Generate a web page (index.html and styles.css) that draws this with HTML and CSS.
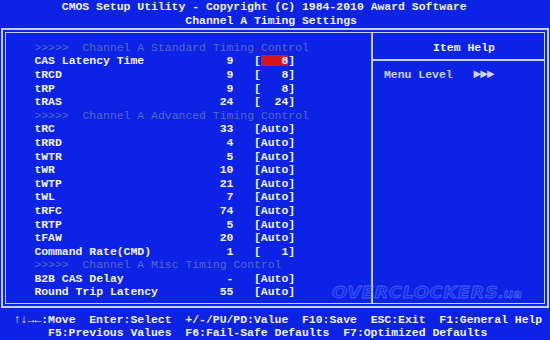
FILE: index.html
```html
<!DOCTYPE html>
<html lang="en">
<head>
  <meta charset="UTF-8" />
  <title>CMOS Setup Utility — Channel A Timing Settings</title>
  <link rel="stylesheet" href="styles.css">
</head>
<body>

<div class="screen">
  <header class="title">
    <div class="line t1">CMOS Setup Utility - Copyright (C) 1984-2010 Award Software</div>
    <div class="line t2">Channel A Timing Settings</div>
  </header>

  <main class="frame">
    <div class="frame-inner">
      <section class="items">
        <div class="row group">&gt;&gt;&gt;&gt;&gt;  Channel A Standard Timing Control</div>
        <div class="row"><span class="label">CAS Latency Time</span><span class="value">9</span><span class="setting">[<span class="sel">   8</span>]</span></div>
        <div class="row"><span class="label">tRCD</span><span class="value">9</span><span class="setting">[   8]</span></div>
        <div class="row"><span class="label">tRP</span><span class="value">9</span><span class="setting">[   8]</span></div>
        <div class="row"><span class="label">tRAS</span><span class="value">24</span><span class="setting">[  24]</span></div>
        <div class="row group">&gt;&gt;&gt;&gt;&gt;  Channel A Advanced Timing Control</div>
        <div class="row"><span class="label">tRC</span><span class="value">33</span><span class="setting">[Auto]</span></div>
        <div class="row"><span class="label">tRRD</span><span class="value">4</span><span class="setting">[Auto]</span></div>
        <div class="row"><span class="label">tWTR</span><span class="value">5</span><span class="setting">[Auto]</span></div>
        <div class="row"><span class="label">tWR</span><span class="value">10</span><span class="setting">[Auto]</span></div>
        <div class="row"><span class="label">tWTP</span><span class="value">21</span><span class="setting">[Auto]</span></div>
        <div class="row"><span class="label">tWL</span><span class="value">7</span><span class="setting">[Auto]</span></div>
        <div class="row"><span class="label">tRFC</span><span class="value">74</span><span class="setting">[Auto]</span></div>
        <div class="row"><span class="label">tRTP</span><span class="value">5</span><span class="setting">[Auto]</span></div>
        <div class="row"><span class="label">tFAW</span><span class="value">20</span><span class="setting">[Auto]</span></div>
        <div class="row"><span class="label">Command Rate(CMD)</span><span class="value">1</span><span class="setting">[   1]</span></div>
        <div class="row group">&gt;&gt;&gt;&gt;&gt;  Channel A Misc Timing Control</div>
        <div class="row"><span class="label">B2B CAS Delay</span><span class="value">-</span><span class="setting">[Auto]</span></div>
        <div class="row"><span class="label">Round Trip Latency</span><span class="value">55</span><span class="setting">[Auto]</span></div>
      </section>

      <aside class="help">
        <div class="help-title">Item Help</div>
        <div class="help-line">Menu Level   <span class="arrows">►►►</span></div>
      </aside>
    </div>
  </main>

  <footer class="keys">
    <div class="line k1">↑↓→←:Move  Enter:Select  +/-/PU/PD:Value  F10:Save  ESC:Exit  F1:General Help</div>
    <div class="line k2">F5:Previous Values  F6:Fail-Safe Defaults  F7:Optimized Defaults</div>
  </footer>

  <div class="watermark">OVERCLOCKERS<span class="tld">.ua</span></div>
</div>

</body>
</html>
```

FILE: styles.css
```css
* { box-sizing: border-box; }
html, body {
  margin: 0;
  height: 100%;
}
body {
  background: #0c22e4;
  color: #f2f4ff;
  font-family: 'Liberation Mono', 'DejaVu Sans Mono', monospace;
  font-size: 11.458px;
  font-weight: bold;
  line-height: 13.6px;
  overflow: hidden;
}

.screen {
  position: relative;
  width: 550px;
  height: 340px;
}

.line { white-space: pre; height: 13.6px; }

/* top title */
.title .t1 { padding-left: 9ch; }
.title .t2 { padding-left: 27ch; }

/* double line frame */
.frame {
  margin: 0.8px 1px 0 1px;
  border: 2px solid #c4d0ff;
  padding: 2px;
}
.frame-inner {
  display: flex;
  border: 1px solid #c4d0ff;
}

.items {
  flex: 0 0 365px;
  padding: 7.8px 0 3.8px 28.4px;
}
.row {
  display: grid;
  grid-template-columns: 25ch 4ch 3ch 6ch;
  height: 13.6px;
  white-space: pre;
}
.row .value { text-align: right; }
.row .setting { grid-column: 4; }
.row.group {
  display: block;
  color: #5468c6;
  font-weight: normal;
}
.sel {
  display: inline-block;
  background: #d8161a;
  line-height: 11px;
  vertical-align: 0;
}

.help {
  flex: 1;
  border-left: 2px solid #c4d0ff;
}
.help-title {
  text-align: center;
  padding: 7.8px 0 5.1px 11px;
  height: 28.5px;
  border-bottom: 2px solid #c4d0ff;
}
.help-line {
  margin-top: 6.5px;
  padding-left: 11px;
  white-space: pre;
  color: #cdd3f6;
}
.arrows { font-size: 13px; letter-spacing: -1px; }

/* bottom key legend */
.keys { margin-top: 4.8px; }
.keys .k1 { padding-left: 2ch; }
.keys .k2 { padding-left: 7ch; }

/* photo watermark, faint, over the lower right of the frame */
.watermark {
  position: absolute;
  left: 332px;
  top: 285px;
  font-family: 'DejaVu Sans', sans-serif;
  font-style: italic;
  font-weight: bold;
  font-size: 16px;
  line-height: 16px;
  letter-spacing: 0.5px;
  color: rgba(50, 80, 250, 0.3);
  -webkit-text-stroke: 0.8px rgba(130, 155, 255, 0.45);
  transform: scaleX(1.12);
  transform-origin: left top;
  pointer-events: none;
}
.watermark .tld {
  font-size: 12px;
  letter-spacing: 0;
}
```
